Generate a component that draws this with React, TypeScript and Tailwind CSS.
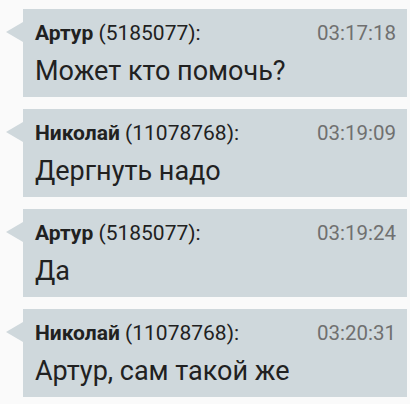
import React from 'react';

type Msg = { name: string; id: string; time: string; text: string };

const MESSAGES: Msg[] = [
  { name: 'Артур', id: '5185077', time: '03:17:18', text: 'Может кто помочь?' },
  { name: 'Николай', id: '11078768', time: '03:19:09', text: 'Дергнуть надо' },
  { name: 'Артур', id: '5185077', time: '03:19:24', text: 'Да' },
  { name: 'Николай', id: '11078768', time: '03:20:31', text: 'Артур, сам такой же' },
];

const App: React.FC = () => {
  return (
    <div
      className="w-[410px] h-[404px] bg-[#fafafa] pl-[23px] pr-[3px] pt-[9px] flex flex-col gap-3"
      style={{ fontFamily: 'Roboto, "Noto Sans", sans-serif' }}
    >
      {MESSAGES.map((m, i) => (
        <div key={i} className="relative h-[88px] bg-[#cfd8dc] pl-3 pr-[11px] pt-3">
          {/* tail */}
          <div className="absolute -left-[17px] top-[13px] w-0 h-0 border-y-[10px] border-y-transparent border-r-[17px] border-r-[#cfd8dc]" />
          <div className="flex items-center justify-between leading-6">
            <span className="text-[21px] text-[#212121]">
              <span className="font-bold">{m.name}</span> ({m.id}):
            </span>
            <span className="text-[20.5px] text-[#707070]">{m.time}</span>
          </div>
          <div className="mt-[11px] text-[27px] leading-[30px] text-[#212121]">{m.text}</div>
        </div>
      ))}
    </div>
  );
};

export default App;
